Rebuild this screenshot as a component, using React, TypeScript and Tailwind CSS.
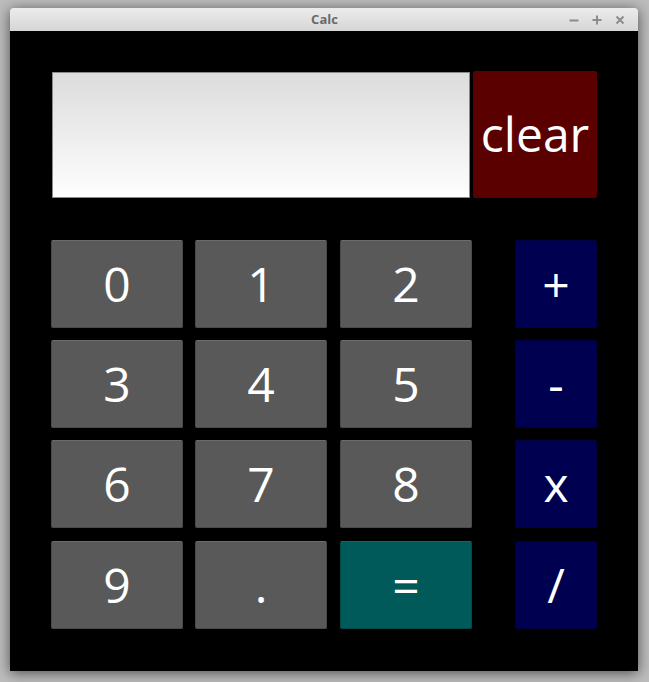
import React from "react";

const font = { fontFamily: '"Open Sans", "DejaVu Sans", sans-serif' };

function Btn({ label, cls, w }: { label: string; cls: string; w: string }) {
  return (
    <div
      className={`${w} h-[88px] rounded-[2px] border flex items-center justify-center text-white text-[48px] leading-none ${cls}`}
    >
      {label}
    </div>
  );
}

const gray = "bg-[#595959] border-[#4a4a4a] border-t-[#6c6c6c]";
const navy = "bg-[#000050] border-[#00003f]";
const teal = "bg-[#005a5a] border-[#004a4a] border-t-[#0a6a6a]";

export default function App() {
  const rows: string[][] = [
    ["0", "1", "2", "+"],
    ["3", "4", "5", "-"],
    ["6", "7", "8", "x"],
    ["9", ".", "=", "/"],
  ];
  return (
    <div className="w-[649px] h-[682px] bg-[#bdbdbd] pl-[10px] pt-[8px] overflow-hidden" style={font}>
      <div className="w-[628px] shadow-[0_2px_14px_rgba(0,0,0,0.6)] rounded-t-[4px]">
        <div className="h-[23px] rounded-t-[4px] bg-gradient-to-b from-[#ececec] to-[#d6d6d6] flex items-center relative">
          <div className="flex-1 text-center text-[13px] font-bold text-[#6a6a6a] pl-[1px]">
            Calc
          </div>
          <div className="absolute right-[13px] top-0 h-[23px] flex items-center gap-[13px]">
            <svg width="10" height="10" viewBox="0 0 10 10">
              <path d="M0.5 5.5H9.5" stroke="#8c8c8c" strokeWidth="2" />
            </svg>
            <svg width="10" height="10" viewBox="0 0 10 10">
              <path d="M0.5 5H9.5M5 0.5V9.5" stroke="#8c8c8c" strokeWidth="2" />
            </svg>
            <svg width="10" height="10" viewBox="0 0 10 10">
              <path d="M1.5 1.5L8.5 8.5M8.5 1.5L1.5 8.5" stroke="#8c8c8c" strokeWidth="2" />
            </svg>
          </div>
        </div>
        <div className="h-[640px] bg-black pl-[41px] pt-[40px]">
          <div className="flex h-[127px]">
            <div className="ml-[1px] mt-[1px] w-[418px] h-[126px] border border-[#8a8a8a] bg-gradient-to-b from-[#dcdcdc] to-[#fefefe]" />
            <div className="ml-[3px] w-[124px] h-[127px] rounded-[2px] bg-[#5a0000] flex items-center justify-center text-white text-[48px] leading-none pb-[2px]">
              clear
            </div>
          </div>
          <div className="mt-[42px] flex flex-col gap-[12px]">
            {rows.map((r, i) => (
              <div key={i} className={`flex ${i === 3 ? "mt-[1px]" : ""}`}>
                <Btn label={r[0]} cls={gray} w="w-[132px]" />
                <div className="w-[12px]" />
                <Btn label={r[1]} cls={gray} w="w-[132px]" />
                <div className="w-[13px]" />
                <Btn label={r[2]} cls={i === 3 ? teal : gray} w="w-[132px]" />
                <div className="w-[43px]" />
                <Btn label={r[3]} cls={navy} w="w-[82px]" />
              </div>
            ))}
          </div>
        </div>
      </div>
    </div>
  );
}
